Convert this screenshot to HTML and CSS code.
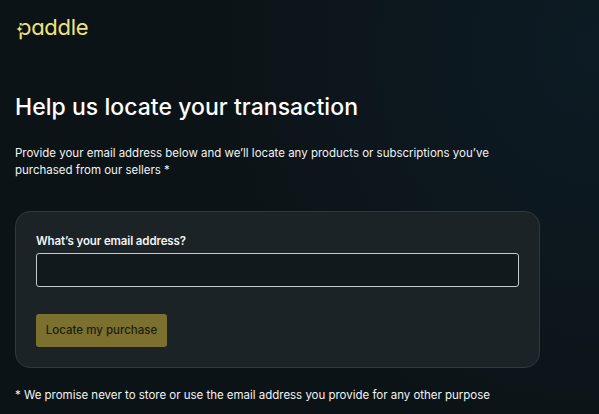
FILE: index.html
```html
<!DOCTYPE html>
<html lang="en">
<head>
    <meta charset="UTF-8">
    <meta name="viewport" content="width=device-width, initial-scale=1.0">
    <title>Paddle</title>
    <link rel="stylesheet" href="styles.css">
</head>
<body>
    <header class="logo">
        <span class="logo-text">paddle</span>
        <svg class="logo-star" width="8" height="8" viewBox="0 0 8 8">
            <rect class="star-gap" x="1.5" y="0.5" width="4.2" height="7"/>
            <path d="M2.5 1 Q3 3.5 5.5 4 Q3 4.5 2.5 7 Q2 4.5 -0.5 4 Q2 3.5 2.5 1Z"/>
        </svg>
    </header>

    <main class="container">
        <h1>Help us locate your transaction</h1>
        <p class="intro">Provide your email address below and we’ll locate any products or subscriptions you’ve<br>purchased from our sellers *</p>

        <form class="card">
            <label for="email">What’s your email address?</label>
            <input type="email" id="email">
            <button type="button">Locate my purchase</button>
        </form>

        <p class="note">* We promise never to store or use the email address you provide for any other purpose</p>
    </main>
</body>
</html>
```
FILE: styles.css
```css
* {
    box-sizing: border-box;
}

body {
    margin: 0;
    min-height: 414px;
    padding: 14px 15px 0;
    font-family: Inter, "Liberation Sans", sans-serif;
    color: #f2f4f4;
    background: radial-gradient(ellipse 400px 420px at 100% 12%, #0c1b24 0%, #0c171e 50%, #0c1316 100%);
    overflow: hidden;
}

.logo {
    position: relative;
    width: 80px;
    height: 28px;
    padding-left: 3px;
    color: #efe37c;
}

.logo-text {
    display: block;
    font-size: 22px;
    line-height: 26px;
    font-weight: 400;
    letter-spacing: -0.3px;
    font-feature-settings: "cv11";
}

.logo-star {
    position: absolute;
    left: 2px;
    top: 11px;
    fill: #efe37c;
    overflow: visible;
}

.star-gap {
    fill: #0c1316;
}

h1 {
    margin: 50px 0 0;
    font-size: 23px;
    line-height: 30px;
    font-weight: 500;
    letter-spacing: 0.04px;
    color: #fff;
    white-space: nowrap;
}

.intro {
    margin: 23px 0 0;
    font-size: 11.5px;
    line-height: 16.5px;
    letter-spacing: -0.015px;
    white-space: nowrap;
}

.card {
    width: 525px;
    height: 157px;
    margin-top: 33px;
    padding: 21px 20px;
    background: #1c2327;
    border: 1px solid #30383b;
    border-radius: 15px;
}

label {
    display: block;
    font-size: 11.5px;
    line-height: 16px;
    font-weight: 600;
    letter-spacing: -0.12px;
}

input {
    display: block;
    width: 483px;
    height: 34px;
    margin-top: 4px;
    background: #11191c;
    border: 1px solid #c5cacb;
    border-radius: 3px;
}

button {
    display: block;
    width: 131px;
    height: 33px;
    margin-top: 27px;
    padding: 0 0 2px;
    font-family: inherit;
    font-size: 11.5px;
    font-weight: 500;
    color: #1d1d12;
    background: #7c702f;
    border: none;
    border-radius: 3px;
    white-space: nowrap;
}

.note {
    margin: 19px 0 0;
    font-size: 11.5px;
    line-height: 17px;
    letter-spacing: -0.02px;
    white-space: nowrap;
}
```
